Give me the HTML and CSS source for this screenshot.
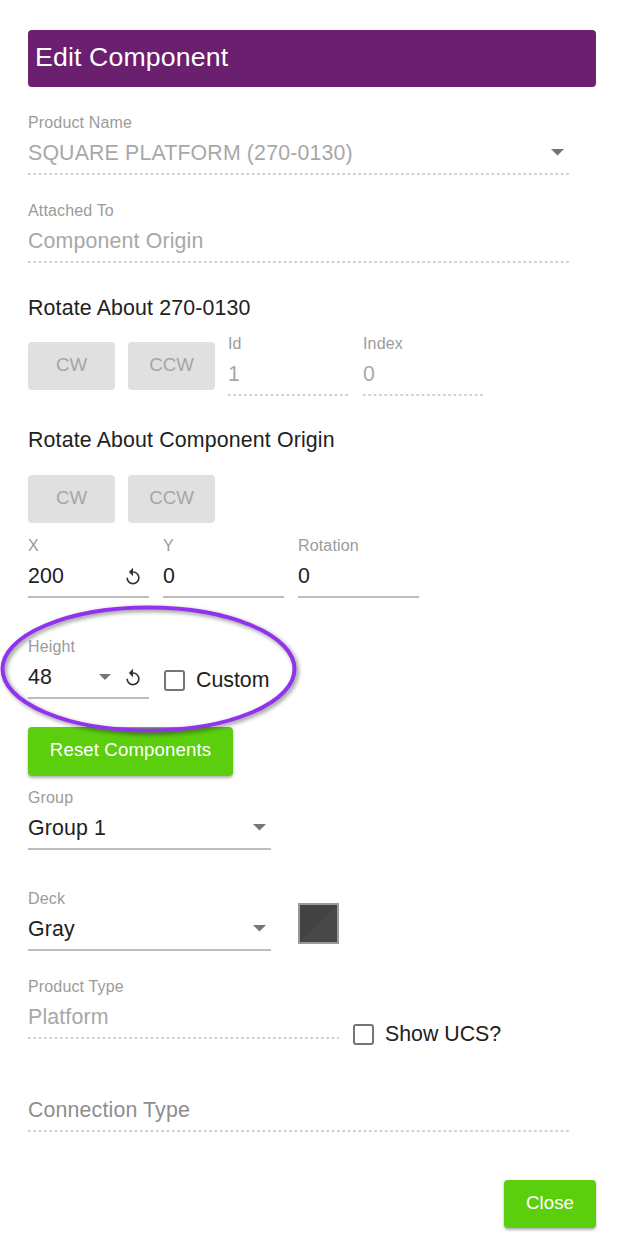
FILE: index.html
```html
<!DOCTYPE html>
<html lang="en">
<head>
  <meta charset="UTF-8" />
  <title>Edit Component</title>
  <link rel="stylesheet" href="styles.css">
</head>
<body>

  <div class="panel">
    <h2 class="title">Edit Component</h2>

    <div class="field field-full disabled product-name">
      <label>Product Name</label>
      <div class="control">
        <span class="value">SQUARE PLATFORM (270-0130)</span>
        <svg class="caret" viewBox="7 10 10 5"><path d="M7 10l5 5 5-5z"/></svg>
      </div>
    </div>

    <div class="field field-full disabled attached-to">
      <label>Attached To</label>
      <div class="control"><span class="value">Component Origin</span></div>
    </div>

    <h3 class="section-title first">Rotate About 270-0130</h3>
    <div class="row rotate-row">
      <button class="rotate-btn" disabled>CW</button>
      <button class="rotate-btn" disabled>CCW</button>
      <div class="field field-small disabled id-field">
        <label>Id</label>
        <div class="control"><span class="value">1</span></div>
      </div>
      <div class="field field-small disabled">
        <label>Index</label>
        <div class="control"><span class="value">0</span></div>
      </div>
    </div>

    <h3 class="section-title second">Rotate About Component Origin</h3>
    <div class="row origin-btns">
      <button class="rotate-btn" disabled>CW</button>
      <button class="rotate-btn" disabled>CCW</button>
    </div>

    <div class="row coords">
      <div class="field field-small">
        <label>X</label>
        <div class="control">
          <span class="value">200</span>
          <svg class="reset-icon" viewBox="0 0 24 24"><path d="M12 5V1L7 6l5 5V7c3.31 0 6 2.69 6 6s-2.69 6-6 6-6-2.69-6-6H4c0 4.42 3.58 8 8 8s8-3.58 8-8-3.58-8-8-8z"/></svg>
        </div>
      </div>
      <div class="field field-small">
        <label>Y</label>
        <div class="control"><span class="value">0</span></div>
      </div>
      <div class="field field-small">
        <label>Rotation</label>
        <div class="control"><span class="value">0</span></div>
      </div>
    </div>

    <div class="row height-row">
      <div class="field field-small">
        <label>Height</label>
        <div class="control">
          <span class="value">48</span>
          <svg class="caret caret-height" viewBox="7 10 10 5"><path d="M7 10l5 5 5-5z"/></svg>
          <svg class="reset-icon" viewBox="0 0 24 24"><path d="M12 5V1L7 6l5 5V7c3.31 0 6 2.69 6 6s-2.69 6-6 6-6-2.69-6-6H4c0 4.42 3.58 8 8 8s8-3.58 8-8-3.58-8-8-8z"/></svg>
        </div>
      </div>
      <div class="check check-custom"><span class="box"></span><span>Custom</span></div>
    </div>

    <button class="green-btn reset-btn">Reset Components</button>

    <div class="field field-medium group-field">
      <label>Group</label>
      <div class="control">
        <span class="value">Group 1</span>
        <svg class="caret" viewBox="7 10 10 5"><path d="M7 10l5 5 5-5z"/></svg>
      </div>
    </div>

    <div class="row deck-row">
      <div class="field field-medium">
        <label>Deck</label>
        <div class="control">
          <span class="value">Gray</span>
          <svg class="caret" viewBox="7 10 10 5"><path d="M7 10l5 5 5-5z"/></svg>
        </div>
      </div>
      <div class="swatch"></div>
    </div>

    <div class="row type-row">
      <div class="field field-type disabled">
        <label>Product Type</label>
        <div class="control"><span class="value">Platform</span></div>
      </div>
      <div class="check check-ucs"><span class="box"></span><span>Show UCS?</span></div>
    </div>

    <div class="field field-full disabled connection">
      <label>&nbsp;</label>
      <div class="control"><span class="value">Connection Type</span></div>
    </div>

    <div class="actions">
      <button class="green-btn close-btn">Close</button>
    </div>

    <svg class="highlight" viewBox="0 0 300 130">
      <ellipse cx="148.5" cy="65" rx="146" ry="61.5"/>
    </svg>
  </div>

</body>
</html>
```

FILE: styles.css
```css
* {
  box-sizing: border-box;
}

body {
  margin: 0;
  background: #fff;
  color: #212121;
  font-family: 'Liberation Sans', Arial, sans-serif;
}

.panel {
  position: relative;
  width: 621px;
  height: 1246px;
  padding: 30px 25px 0 28px;
  overflow: hidden;
}

.title {
  height: 57px;
  margin: 0 0 27px;
  padding: 10px 7px 0;
  background: #6a1f6f;
  border-radius: 4px;
  color: #fff;
  font-size: 26.67px;
  font-weight: 400;
  letter-spacing: 0.15px;
  line-height: 34px;
}

.row {
  display: flex;
  align-items: flex-start;
}

/* fields */
.field {
  display: flex;
  flex-direction: column;
  height: 61px;
}

.field label {
  height: 16px;
  color: #9b9b9b;
  font-size: 16px;
  letter-spacing: 0.15px;
  line-height: 17px;
}

.control {
  display: flex;
  align-items: center;
  height: 45px;
  padding-top: 8px;
  padding-bottom: 6px;
  border-bottom: 2px solid #bdbdbd;
}

.value {
  flex: 1;
  font-size: 21.33px;
  letter-spacing: 0.15px;
  line-height: 30px;
}

.disabled .value {
  color: #a8a8a8;
}

.disabled .control {
  border-bottom: none;
  padding-bottom: 8px;
  background: linear-gradient(to right, #d0d0d0 50%, transparent 50%) left bottom / 5.33px 2px repeat-x;
}

.field-full {
  width: 541px;
}

.field-small {
  width: 121px;
  margin-right: 14px;
}

.field-medium {
  width: 243px;
}

.field-type {
  width: 311px;
}

.attached-to {
  margin-top: 27px;
}

.caret {
  flex: none;
  width: 13px;
  height: 6.5px;
  margin-right: 5px;
  fill: #757575;
}

.caret-height {
  width: 12px;
  height: 6px;
  margin-right: 12px;
}

.reset-icon {
  flex: none;
  width: 20px;
  height: 20px;
  margin-top: 3px;
  margin-right: 6px;
  fill: #333;
}

/* rotate sections */
.section-title {
  height: 24px;
  margin: 0;
  font-size: 21.33px;
  font-weight: 400;
  letter-spacing: 0.15px;
  line-height: 25px;
}

.section-title.first {
  margin-top: 33px;
}

.section-title.second {
  margin-top: 32px;
}

.rotate-row {
  margin-top: 15px;
}

.rotate-row .rotate-btn {
  margin-top: 7px;
}

.origin-btns {
  margin-top: 23px;
}

.rotate-btn {
  width: 87px;
  height: 48px;
  margin: 0 13px 0 0;
  padding: 0 0 3px;
  background: #e0e0e0;
  border: none;
  border-radius: 4px;
  color: #a6a6a6;
  font-family: inherit;
  font-size: 18.67px;
}

.coords {
  margin-top: 14px;
}

.height-row {
  margin-top: 40px;
}

/* checkboxes */
.check {
  display: flex;
  align-items: center;
  font-size: 21.33px;
  line-height: 24px;
}

.box {
  width: 21px;
  height: 21px;
  margin-right: 11px;
  border: 2px solid #757575;
  border-radius: 3px;
}

.check-custom {
  margin-top: 30px;
  margin-left: 1px;
}

.check-ucs {
  margin-top: 44px;
  margin-left: 14px;
}

/* green buttons */
.green-btn {
  padding: 0 0 3px;
  background: #5bce0e;
  border: none;
  border-radius: 4px;
  box-shadow: 0 2px 3px rgba(0, 0, 0, 0.3);
  color: #fff;
  font-family: inherit;
  font-size: 18.67px;
  font-weight: 400;
  letter-spacing: 0.1px;
}

.reset-btn {
  display: block;
  width: 205px;
  height: 49px;
  margin-top: 28px;
}

.group-field {
  margin-top: 13px;
}

.deck-row {
  margin-top: 40px;
}

.swatch {
  width: 41px;
  height: 41px;
  margin: 13px 0 0 27px;
  background: linear-gradient(135deg, #424242 50%, #484848 50%);
  border: 2px solid #9a9a9a;
}

.type-row {
  margin-top: 27px;
}

.connection {
  margin-top: 25px;
}

.connection .value {
  color: #8e8e8e;
}

.actions {
  display: flex;
  justify-content: flex-end;
  margin-top: 48px;
}

.close-btn {
  width: 92px;
  height: 48px;
}

/* purple callout drawn over the height row */
.highlight {
  position: absolute;
  left: 0;
  top: 604px;
  width: 300px;
  height: 130px;
  overflow: visible;
  filter: drop-shadow(2px 2px 2px rgba(0, 0, 0, 0.45));
}

.highlight ellipse {
  fill: none;
  stroke: #9232ee;
  stroke-width: 4;
}
```
